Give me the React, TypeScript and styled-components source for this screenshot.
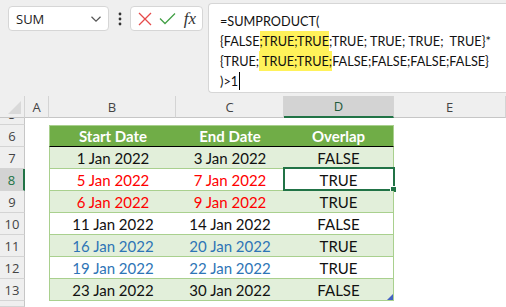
import React from 'react';
import styled, { createGlobalStyle } from 'styled-components';

const GlobalStyle = createGlobalStyle`
    html, body {
        margin: 0;
        padding: 0;
        background: #efefef;
        overflow: hidden;
    }
    body {
        width: 506px;
        height: 307px;
    }
`;

const Page = styled.div`
    width: 506px;
    height: 307px;
    display: flex;
    flex-direction: column;
    font-family: Lato, 'Open Sans', sans-serif;
`;

const Toolbar = styled.div`
    height: 96px;
    display: flex;
    align-items: flex-start;
    padding-left: 8px;
    box-sizing: border-box;
`;

const NameBox = styled.div`
    flex-shrink: 0;
    margin-top: 6px;
    width: 101px;
    height: 25px;
    box-sizing: border-box;
    border: 1px solid #d6d6d6;
    border-radius: 4px;
    background: #fff;
    display: flex;
    align-items: center;
    justify-content: space-between;
    padding: 0 6px 0 7px;
    font-family: 'Open Sans', sans-serif;
    font-size: 13px;
    color: #222;
`;

const Dots = styled.div`
    flex-shrink: 0;
    width: 21px;
    height: 37px;
    display: flex;
    align-items: center;
    justify-content: center;
`;

const FxBox = styled.div`
    flex-shrink: 0;
    margin-top: 6px;
    width: 73px;
    height: 25px;
    box-sizing: border-box;
    border: 1px solid #d6d6d6;
    border-radius: 4px;
    background: #fff;
    display: flex;
    align-items: center;
    justify-content: space-between;
    padding: 0 6px 0 7px;
`;

const FxLabel = styled.span`
    font-family: 'Liberation Serif', serif;
    font-style: italic;
    font-size: 17px;
    color: #333;
    line-height: 1;
`;

const FormulaBox = styled.div`
    margin: 3px 0 0 5px;
    flex: 1;
    min-width: 0;
    height: 90px;
    overflow: hidden;
    box-sizing: border-box;
    border: 1px solid #d6d6d6;
    border-right: none;
    border-radius: 4px 0 0 4px;
    background: #fff;
    padding: 7px 0 0 11px;
    font-size: 12.7px;
    color: #111;
`;

const FormulaLine = styled.div`
    height: 20px;
    line-height: 20px;
    white-space: pre;
`;

const Mark = styled.span`
    background: #fff25a;
    padding: 2px 0;
`;

const Caret = styled.span`
    display: inline-block;
    width: 1px;
    height: 18px;
    background: #000;
    vertical-align: -4px;
    margin-left: 1px;
`;

const Sheet = styled.div`
    flex: 1;
    display: grid;
    grid-template-columns: 25px 24px 127px 108px 110px 1fr;
    grid-template-rows: 22px 7px repeat(8, 22px) 1fr;
    font-size: 15px;
    background: #fff;
`;

const Corner = styled.div`
    background: #efefef;
    border-right: 1px solid #d4d4d4;
    border-bottom: 1px solid #c6c6c6;
    box-sizing: border-box;
    display: flex;
    align-items: flex-end;
    justify-content: flex-end;
    padding: 0 3px 3px 0;
`;

const Triangle = styled.div`
    width: 0;
    height: 0;
    border-left: 13px solid transparent;
    border-bottom: 13px solid #d9d9d9;
`;

const ColHead = styled.div<{ $active?: boolean }>`
    background: ${p => (p.$active ? '#d3d3d3' : '#efefef')};
    border-right: 1px solid #d4d4d4;
    border-bottom: ${p => (p.$active ? '2px solid #217346' : '1px solid #c6c6c6')};
    box-sizing: border-box;
    display: flex;
    align-items: center;
    justify-content: center;
    font-family: 'Open Sans', sans-serif;
    font-size: 13px;
    color: ${p => (p.$active ? '#1e5a3a' : '#444')};
`;

const RowHead = styled.div<{ $active?: boolean }>`
    background: ${p => (p.$active ? '#d3d3d3' : '#efefef')};
    border-bottom: 1px solid #d4d4d4;
    border-right: ${p => (p.$active ? '2px solid #217346' : '1px solid #c6c6c6')};
    box-sizing: border-box;
    display: flex;
    align-items: center;
    justify-content: center;
    overflow: hidden;
    font-family: 'Open Sans', sans-serif;
    font-size: 13px;
    color: ${p => (p.$active ? '#217346' : '#444')};
`;

const ClippedLabel = styled.span`
    align-self: flex-start;
    margin-top: -13px;
    line-height: 18px;
`;

const Blank = styled.div``;

type Band = 'head' | 'odd' | 'even';

const Cell = styled.div<{ $band: Band; $tone?: string; $edge?: 'left' | 'right' }>`
    position: relative;
    box-sizing: border-box;
    display: flex;
    align-items: center;
    justify-content: center;
    background: ${p => (p.$band === 'head' ? '#70ad47' : p.$band === 'odd' ? '#e2efda' : '#fff')};
    color: ${p => (p.$band === 'head' ? '#fff' : p.$tone || '#111')};
    font-weight: ${p => (p.$band === 'head' ? 700 : 400)};
    border-top: ${p => (p.$band === 'head' ? '1px solid #a9d08e' : 'none')};
    border-bottom: ${p => (p.$band === 'head' ? '1px solid #000' : '1px solid #a9d08e')};
    border-left: ${p => (p.$edge === 'left' ? '1px solid #a9d08e' : 'none')};
    border-right: ${p => (p.$edge === 'right' ? '1px solid #a9d08e' : 'none')};
`;

const Selection = styled.div`
    position: absolute;
    left: -1px;
    top: -2px;
    right: -2px;
    bottom: -1px;
    border: 2px solid #217346;
`;

const FillHandle = styled.div`
    position: absolute;
    right: -4px;
    bottom: -4px;
    width: 5px;
    height: 5px;
    background: #217346;
    border: 1px solid #fff;
`;

const ResizeHandle = styled.div`
    position: absolute;
    right: 0;
    bottom: 0;
    width: 0;
    height: 0;
    border-left: 6px solid transparent;
    border-bottom: 6px solid #4463c4;
`;

const RED = '#ff0000';
const BLUE = '#2e75b6';

const rows = [
    { n: 7, start: '1 Jan 2022', end: '3 Jan 2022', overlap: 'FALSE' },
    { n: 8, start: '5 Jan 2022', end: '7 Jan 2022', overlap: 'TRUE', tone: RED },
    { n: 9, start: '6 Jan 2022', end: '9 Jan 2022', overlap: 'TRUE', tone: RED },
    { n: 10, start: '11 Jan 2022', end: '14 Jan 2022', overlap: 'FALSE' },
    { n: 11, start: '16 Jan 2022', end: '20 Jan 2022', overlap: 'TRUE', tone: BLUE },
    { n: 12, start: '19 Jan 2022', end: '22 Jan 2022', overlap: 'TRUE', tone: BLUE },
    { n: 13, start: '23 Jan 2022', end: '30 Jan 2022', overlap: 'FALSE' },
];

const App = () => {
    return (
        <Page>
            <GlobalStyle />
            <Toolbar>
                <NameBox>
                    <span>SUM</span>
                    <svg width="12" height="8" viewBox="0 0 12 8">
                        <path d="M1.5 1.8 L6 6.2 L10.5 1.8" fill="none" stroke="#555" strokeWidth="1.2" />
                    </svg>
                </NameBox>
                <Dots>
                    <svg width="4" height="14" viewBox="0 0 4 14">
                        <circle cx="2" cy="2" r="1.4" fill="#333" />
                        <circle cx="2" cy="7" r="1.4" fill="#333" />
                        <circle cx="2" cy="12" r="1.4" fill="#333" />
                    </svg>
                </Dots>
                <FxBox>
                    <svg width="14" height="14" viewBox="0 0 14 14">
                        <path d="M1 1 L13 13 M13 1 L1 13" stroke="#e64a4a" strokeWidth="1.3" />
                    </svg>
                    <svg width="17" height="13" viewBox="0 0 17 13">
                        <path d="M1 6.5 L6 11.5 L16 1.5" fill="none" stroke="#43a047" strokeWidth="1.3" />
                    </svg>
                    <FxLabel>fx</FxLabel>
                </FxBox>
                <FormulaBox>
                    <FormulaLine>=SUMPRODUCT(</FormulaLine>
                    <FormulaLine>
                        {'{FALSE'}
                        <Mark>;TRUE;TRUE</Mark>
                        {';TRUE; TRUE; TRUE;  TRUE}*'}
                    </FormulaLine>
                    <FormulaLine>
                        {'{TRUE;'}
                        <Mark> TRUE;TRUE;</Mark>
                        {'FALSE;FALSE;FALSE;FALSE}'}
                    </FormulaLine>
                    <FormulaLine>
                        {')>1'}
                        <Caret />
                    </FormulaLine>
                </FormulaBox>
            </Toolbar>
            <Sheet>
                <Corner>
                    <Triangle />
                </Corner>
                <ColHead>A</ColHead>
                <ColHead>B</ColHead>
                <ColHead>C</ColHead>
                <ColHead $active>D</ColHead>
                <ColHead>E</ColHead>

                <RowHead>
                    <ClippedLabel>5</ClippedLabel>
                </RowHead>
                <Blank />
                <Blank />
                <Blank />
                <Blank />
                <Blank />

                <RowHead>6</RowHead>
                <Blank />
                <Cell $band="head" $edge="left">Start Date</Cell>
                <Cell $band="head">End Date</Cell>
                <Cell $band="head" $edge="right">Overlap</Cell>
                <Blank />

                {rows.map((row, idx) => {
                    const band: Band = idx % 2 === 0 ? 'odd' : 'even';
                    const last = idx === rows.length - 1;
                    return (
                        <React.Fragment key={row.n}>
                            <RowHead $active={row.n === 8}>{row.n}</RowHead>
                            <Blank />
                            <Cell $band={band} $tone={row.tone} $edge="left">
                                {row.start}
                            </Cell>
                            <Cell $band={band} $tone={row.tone}>
                                {row.end}
                            </Cell>
                            <Cell $band={band} $edge="right">
                                {row.overlap}
                                {row.n === 8 && (
                                    <Selection>
                                        <FillHandle />
                                    </Selection>
                                )}
                                {last && <ResizeHandle />}
                            </Cell>
                            <Blank />
                        </React.Fragment>
                    );
                })}

                <RowHead />
                <Blank />
                <Blank />
                <Blank />
                <Blank />
                <Blank />
            </Sheet>
        </Page>
    );
};

export default App;
